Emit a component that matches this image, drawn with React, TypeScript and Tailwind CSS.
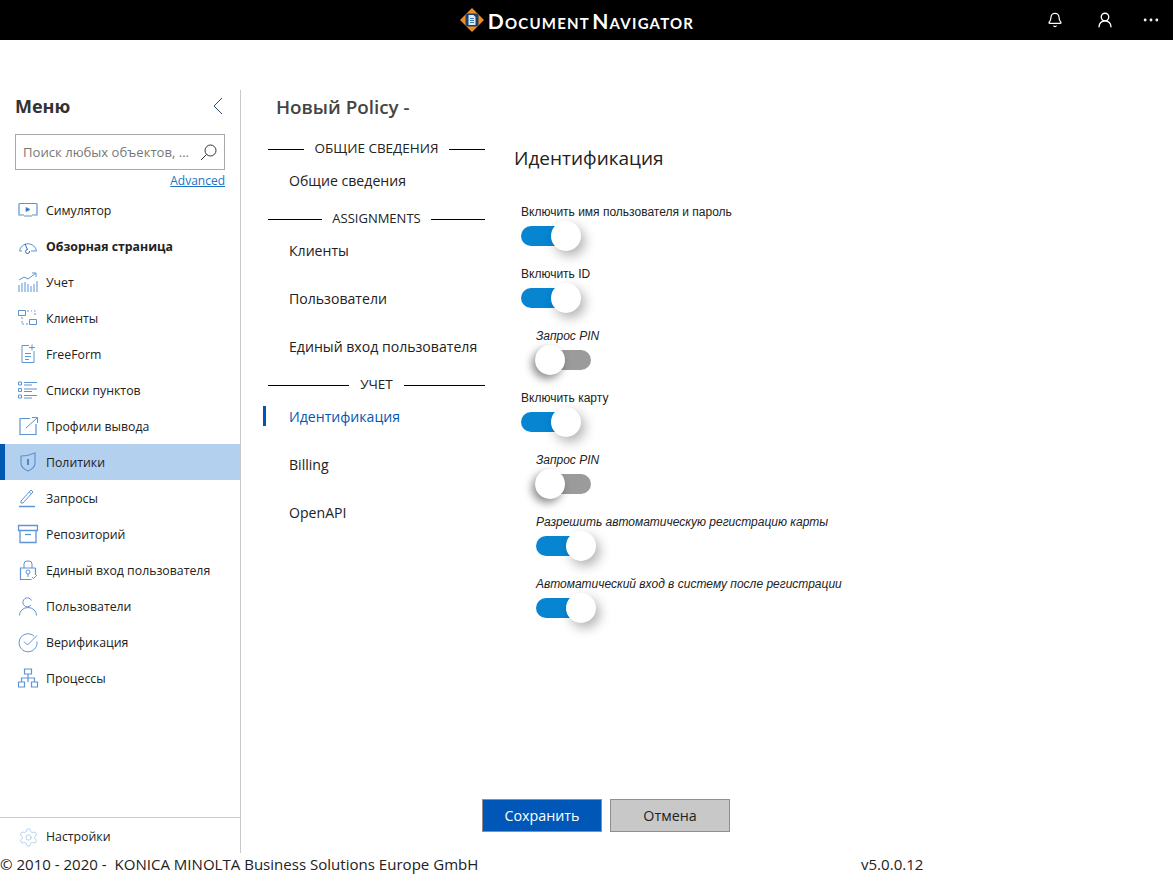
import { Bell, Ellipsis, Settings, UserRound } from "lucide-react";
import type { ReactNode } from "react";

const stroke = { fill: "none", stroke: "#5c94d6", strokeWidth: 1 };

function Ico({ children }: { children: ReactNode }) {
  return (
    <svg viewBox="0 0 22 22" width="22" height="22" className="shrink-0" {...stroke}>
      {children}
    </svg>
  );
}

const menu: { label: string; icon: ReactNode; bold?: boolean; active?: boolean }[] = [
  {
    label: "Симулятор",
    icon: <Ico><path d="M2 4.500h18M2 4.500v11.500h5M20 4.500v11.500h-5M7 17h8" strokeWidth="1.200" /><path d="M9 8.500l4 2-4 2z" fill="#1f5fae" /></Ico>,
  },
  {
    label: "Обзорная страница",
    bold: true,
    icon: <Ico><path d="M5 16H2.500a8.600 8.600 0 0 1 17 0H17" /><path d="M8 9l2.500 5.500a2 2 0 1 0 2 1.500" stroke="#2f6db8" /><path d="M14 16h3" /></Ico>,
  },
  {
    label: "Учет",
    icon: <Ico><path d="M2 9l5-3 4 2 8-6M15 2h4v4" /><path d="M2 21v-7M5 21v-9M8 21v-10M11 21v-8M14 21v-6M17 21v-8M20 21v-11" /></Ico>,
  },
  {
    label: "Клиенты",
    icon: <Ico><path d="M1.500 3.500h7v5h-7zM12.500 12.500h7v5h-7z" /><path d="M10 4h2M14 4h1M17 4h1.500M18 6v3M5 10v2M5 14v3h2M9 17h2" strokeDasharray="2 1" /></Ico>,
  },
  {
    label: "FreeForm",
    icon: <Ico><path d="M12 2.500H5v17h12V8" /><path d="M15 1.500v6M12 4.500h6M8 10.500h6M8 13.500h6M8 16.500h4" /></Ico>,
  },
  {
    label: "Списки пунктов",
    icon: <Ico><path d="M1.500 3h3v3h-3zM1.500 9.500h3v3h-3zM1.500 16h3v3h-3z" /><path d="M7 3.500h13M7 6h8M7 10h13M7 12.500h8M7 16.500h13M7 19h8" /></Ico>,
  },
  {
    label: "Профили вывода",
    icon: <Ico><path d="M13 3.500H3v16h16V9" strokeWidth="1.200" /><path d="M9 13L20 3M15 2.500h5.500V8" /></Ico>,
  },
  {
    label: "Политики",
    active: true,
    icon: <Ico><path d="M4 5q7 0 14-3v10q0 5-7 8-7-3-7-8z" strokeWidth="1.200" /><path d="M11 8v6" stroke="#2f6db8" strokeWidth="1.500" /></Ico>,
  },
  {
    label: "Запросы",
    icon: <Ico><path d="M4 14L14 3l2 2L6 16H4zM12.500 5l2 2" /><path d="M2 19.500h16" strokeWidth="1.500" /></Ico>,
  },
  {
    label: "Репозиторий",
    icon: <Ico><path d="M1.500 2.500h19v5h-19zM3 7.500v12h16v-12" strokeWidth="1.300" /><path d="M8 11.500h6" strokeWidth="1.300" /></Ico>,
  },
  {
    label: "Единый вход пользователя",
    icon: <Ico><path d="M7 9V5a3 3 0 0 1 3-3h2a3 3 0 0 1 3 3v4" /><path d="M18.500 9h-15v11.500h11M18.500 9v7" strokeWidth="1.200" /><circle cx="11" cy="13" r="2" /><path d="M11 15v3M15 18l1.500 1.500 3.500-3.500" /></Ico>,
  },
  {
    label: "Пользователи",
    icon: <Ico><path d="M14.500 5.500A4.500 4.500 0 1 0 14 10" /><path d="M2.500 20.500a8.500 8 0 0 1 17 0" /></Ico>,
  },
  {
    label: "Верификация",
    icon: <Ico><path d="M17 5a9 9 0 1 0 3 5.500" /><path d="M7 10.500l3.500 3.500L20 4.500" /></Ico>,
  },
  {
    label: "Процессы",
    icon: <Ico><path d="M7.500 2h7v5h-7zM1.500 15h6v5h-6zM14.500 15h6v5h-6zM11 7v4M4.500 15v-4h13v4M11 11v4" strokeWidth="1.200" /></Ico>,
  },
];

function MenuRow({ label, icon, bold, active }: { label: string; icon: ReactNode; bold?: boolean; active?: boolean }) {
  return (
    <div className={`flex h-9 items-center gap-[7px] text-[12.300px] text-[#222] ${active ? "border-l-[5px] border-[#0057b2] bg-[#b3d0ef] pl-[13px]" : "pl-[18px]"} ${bold ? "font-bold" : ""}`}>
      <span className="flex w-[22px] justify-center -ml-[1px]">{icon}</span>
      <span className="pt-[2px]">{label}</span>
    </div>
  );
}

function SideHead({ title, line, size }: { title: string; line: string; size: string }) {
  return (
    <div className={`flex h-[20px] items-center text-[#222] ${size}`}>
      <div className={`h-px bg-black ${line}`} />
      <span className="flex-1 text-center">{title}</span>
      <div className={`h-px bg-black ${line}`} />
    </div>
  );
}

function SideLink({ label, active }: { label: string; active?: boolean }) {
  return (
    <div className={`flex h-12 items-center pl-[21px] pt-[2px] text-[14.100px] ${active ? "text-[#0057b2]" : "text-[#222]"}`}>
      {label}
    </div>
  );
}

function Toggle({ label, on, sub }: { label: string; on: boolean; sub?: boolean }) {
  return (
    <div className={`h-[62px] ${sub ? "pl-[14px] italic" : ""}`} style={{ fontFamily: "'Liberation Sans', sans-serif" }}>
      <div className={`h-[14px] text-[12px] leading-[14px] text-[#222] ${sub ? "ml-px" : ""}`}>{label}</div>
      <div className={`relative mt-[7px] h-5 w-14 rounded-full ${on ? "bg-[#0785d1]" : "bg-[#9b9b9b]"} ${on && sub ? "ml-px" : ""}`}>
        <div className={`absolute -top-[5px] h-[30px] w-[30px] rounded-full bg-white ${on ? "left-[30px] shadow-[4px_5px_12px_rgba(0,0,0,0.3)]" : "left-0 shadow-[-3px_4px_9px_rgba(0,0,0,0.45)]"}`} />
      </div>
    </div>
  );
}

export default function App() {
  return (
    <div className="flex h-[874px] w-full flex-col overflow-hidden bg-white text-[#222]" style={{ fontFamily: "'Open Sans', sans-serif" }}>
      <header className="relative flex h-10 shrink-0 items-center justify-center bg-black text-white">
        <div className="-ml-[19px] flex items-center gap-[4px]">
          <svg viewBox="0 0 24 24" width="24" height="24">
            <path d="M12 0l12 12-12 12L0 12z" fill="#f28c1e" />
            <path d="M3.500 3.500l2 2M20.500 3.500l-2 2M3.500 20.500l2-2M20.500 20.500l-2-2" stroke="#000" strokeWidth="2" />
            <rect x="5.500" y="5.500" width="13" height="13" rx="2.500" fill="#17406b" />
            <path d="M8.500 7h5l2 2v8h-7z" fill="#d8e8f6" />
            <path d="M10 10.500h4M10 12.500h4M10 14.500h4" stroke="#3e78b3" strokeWidth="1" />
          </svg>
          <span className="whitespace-nowrap text-[21px] font-bold leading-none tracking-[1.2px] [word-spacing:-4px]" style={{ fontFamily: "Lato, sans-serif", fontVariant: "small-caps" }}>
            Document Navigator
          </span>
        </div>
        <div className="absolute right-0 top-0 flex h-10 items-center">
          <Bell size={16} strokeWidth={1.800} className="mr-[33px]" />
          <UserRound size={18} strokeWidth={1.800} className="mr-[27px]" />
          <Ellipsis size={20} strokeWidth={1.400} className="mr-[12px]" />
        </div>
      </header>

      <main className="flex min-h-0 flex-1 pt-[50px]">
        <aside className="flex w-[241px] shrink-0 flex-col border-r border-[#c8c8c8]">
          <div className="flex items-center justify-between pl-[15px] pr-[17px] pt-[3px]">
            <span className="text-[18px] font-bold leading-[26px] text-[#333]">Меню</span>
            <svg viewBox="0 0 10 18" width="10" height="18" fill="none" stroke="#2a4e78">
              <path d="M9 1L1 9l8 8" />
            </svg>
          </div>
          <div className="mx-[15px] mt-[15px] flex h-[36px] w-[210px] items-center justify-between border border-[#aaa] pl-[7px] pr-[7px]">
            <span className="pt-[2px] text-[13.100px] whitespace-nowrap text-[#777]">Поиск любых объектов, ...</span>
            <svg viewBox="0 0 17 17" width="17" height="17" fill="none" stroke="#333">
              <circle cx="10.500" cy="6.500" r="5.500" />
              <path d="M6.500 10.500L1 16" />
            </svg>
          </div>
          <div className="mr-[15px] h-[22px] pt-[1px] text-right text-[12px] leading-[20px] text-[#1a73c7] underline">Advanced</div>
          {menu.map((m) => (
            <MenuRow key={m.label} {...m} />
          ))}
          <div className="flex-1" />
          <div className="flex h-[36px] items-center gap-[7px] border-t border-[#ccc] pl-[18px] pt-[3px] text-[12.300px]">
            <Settings size={21} strokeWidth={0.900} className="text-[#a3c2e6]" />
            <span>Настройки</span>
          </div>
        </aside>

        <div className="flex min-w-0 flex-1 flex-col">
          <div className="flex min-h-0 flex-1">
            <div className="ml-[27px] w-[217px] shrink-0">
              <div className="ml-[8px] h-[49px] pt-[4px] text-[18.800px] font-semibold leading-[26px] text-[#444]">Новый Policy -</div>
              <SideHead title="ОБЩИЕ СВЕДЕНИЯ" line="w-[36px]" size="text-[13.500px] [&>span]:-translate-y-px" />
              <div className="h-[50px] pt-[11px] pl-[21px] text-[14.100px] leading-[22px] text-[#222]">Общие сведения</div>
              <SideHead title="ASSIGNMENTS" line="w-[54px]" size="text-[13px]" />
              <div className="-mt-[3px]">
                <SideLink label="Клиенты" />
                <SideLink label="Пользователи" />
                <SideLink label="Единый вход пользователя" />
              </div>
              <div className="mt-[5px]">
                <SideHead title="УЧЕТ" line="w-[81px]" size="text-[13.500px] [&>span]:-translate-y-px" />
              </div>
              <div className="relative -mt-[3px]">
                <div className="absolute -left-[5px] top-[14px] h-5 w-[3px] bg-[#0057b2]" />
                <SideLink label="Идентификация" active />
              </div>
              <SideLink label="Billing" />
              <SideLink label="OpenAPI" />
            </div>
            <div className="ml-[29px] flex-1">
              <div className="h-[114px] pt-[55px] text-[19px] leading-[26px] text-[#222]">Идентификация</div>
              <div className="pl-[7px] pt-[1px]">
                <Toggle label="Включить имя пользователя и пароль" on />
                <Toggle label="Включить ID" on />
                <Toggle label="Запрос PIN" on={false} sub />
                <Toggle label="Включить карту" on />
                <Toggle label="Запрос PIN" on={false} sub />
                <Toggle label="Разрешить автоматическую регистрацию карты" on sub />
                <Toggle label="Автоматический вход в систему после регистрации" on sub />
              </div>
            </div>
          </div>
          <div className="ml-[241px] flex h-[54px] shrink-0 gap-2 text-[14.300px]">
            <button className="h-[33px] w-[120px] border border-[#8f8f8f] bg-[#0057b7] text-white">Сохранить</button>
            <button className="h-[33px] w-[120px] border border-[#8f8f8f] bg-[#c8c8c8] text-[#222]">Отмена</button>
          </div>
        </div>
      </main>

      <footer className="flex h-[21px] shrink-0 items-center whitespace-pre pt-[1px] text-[15.050px] text-[#222]">
        <span className="w-[861px]">© 2010 - 2020 -  KONICA MINOLTA Business Solutions Europe GmbH</span>
        <span>v5.0.0.12</span>
      </footer>
    </div>
  );
}
